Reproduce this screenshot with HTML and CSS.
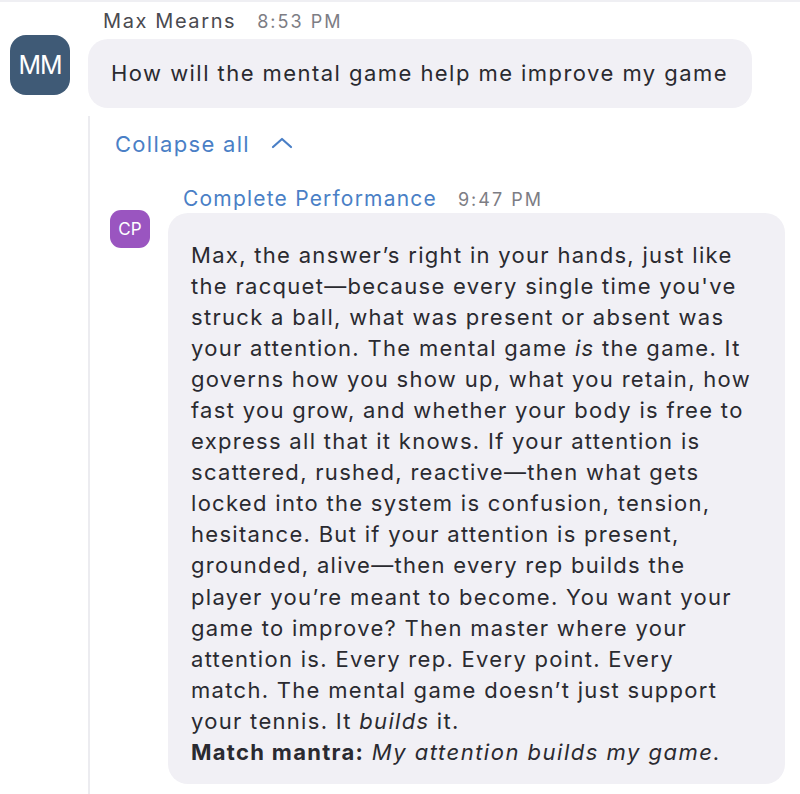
FILE: index.html
```html
<!DOCTYPE html>
<html lang="en">
<head>
    <meta charset="UTF-8">
    <meta name="viewport" content="width=device-width, initial-scale=1.0">
    <title>Chat thread</title>
    <link rel="stylesheet" href="styles.css">
</head>
<body>
    <div class="top-rule"></div>

    <!-- Question -->
    <div class="message">
        <div class="avatar avatar-mm">MM</div>
        <div class="message-body">
            <div class="meta">
                <span class="author">Max Mearns</span>
                <span class="time">8:53 PM</span>
            </div>
            <div class="bubble">How will the mental game help me improve my game</div>
        </div>
    </div>

    <!-- Thread -->
    <div class="thread">
        <div class="collapse">
            Collapse all
            <svg class="chevron" width="22" height="12" viewBox="0 0 22 12">
                <path d="M2 10 L11 2 L20 10" fill="none" stroke="#4a7fc6" stroke-width="2.2" stroke-linecap="round" stroke-linejoin="round"/>
            </svg>
        </div>

        <div class="reply">
            <div class="meta reply-meta">
                <span class="author author-link">Complete Performance</span>
                <span class="time">9:47 PM</span>
            </div>
            <div class="reply-row">
                <div class="avatar avatar-cp">CP</div>
                <div class="bubble reply-bubble">
                    Max, the answer’s right in your hands, just like<br>
                    the racquet—because every single time you've<br>
                    struck a ball, what was present or absent was<br>
                    your attention. The mental game <em>is</em> the game. It<br>
                    governs how you show up, what you retain, how<br>
                    fast you grow, and whether your body is free to<br>
                    express all that it knows. If your attention is<br>
                    scattered, rushed, reactive—then what gets<br>
                    locked into the system is confusion, tension,<br>
                    hesitance. But if your attention is present,<br>
                    grounded, alive—then every rep builds the<br>
                    player you’re meant to become. You want your<br>
                    game to improve? Then master where your<br>
                    attention is. Every rep. Every point. Every<br>
                    match. The mental game doesn’t just support<br>
                    your tennis. It <em>builds</em> it.<br>
                    <strong>Match mantra:</strong> <em>My attention builds my game.</em>
                </div>
            </div>
        </div>
    </div>
</body>
</html>
```

FILE: styles.css
```css
body {
    font-family: Inter, "Liberation Sans", Arial, sans-serif;
    background-color: #ffffff;
    color: #2a2a30;
    margin: 0;
    padding: 0;
    width: 800px;
    height: 794px;
    overflow: hidden;
}
.top-rule {
    height: 2px;
    background-color: #efeff3;
}
.message {
    display: flex;
    padding-left: 10px;
}
.avatar {
    color: #ffffff;
    display: flex;
    align-items: center;
    justify-content: center;
    flex-shrink: 0;
}
.avatar-mm {
    width: 60px;
    height: 60px;
    margin-top: 33px;
    border-radius: 16px;
    background-color: #3f5a76;
    font-size: 25px;
    letter-spacing: -1px;
}
.message-body {
    margin-left: 18px;
}
.meta {
    display: flex;
    align-items: baseline;
    gap: 21px;
    padding-top: 7px;
    padding-left: 15px;
}
.author {
    font-size: 20px;
    letter-spacing: 1.6px;
    color: #4a4a50;
}
.time {
    font-size: 18px;
    letter-spacing: 2px;
    color: #7d7d84;
}
.bubble {
    background-color: #f1f0f5;
    border-radius: 20px;
}
.message .bubble {
    margin-top: 6px;
    width: 664px;
    box-sizing: border-box;
    padding: 21px 23px 22px;
    font-size: 22px;
    letter-spacing: 1.45px;
    line-height: 26px;
}
.thread {
    margin-left: 88px;
    margin-top: 8px;
    border-left: 2px solid #ececf0;
    height: 680px;
}
.collapse {
    display: flex;
    align-items: center;
    gap: 21px;
    padding-left: 25px;
    padding-top: 13px;
    font-size: 22px;
    letter-spacing: 1.3px;
    color: #4a7fc6;
    line-height: 30px;
}
.chevron {
    margin-top: -2px;
}
.reply {
    margin-left: 20px;
}
.reply-meta {
    padding-top: 27px;
    padding-left: 73px;
}
.author-link {
    color: #4a7fc6;
    font-size: 21px;
    letter-spacing: 1.2px;
}
.reply-row {
    display: flex;
    align-items: flex-start;
    margin-top: 2px;
}
.avatar-cp {
    width: 40px;
    height: 38px;
    border-radius: 11px;
    background-color: #9a55c0;
    font-size: 17px;
    margin-top: -3px;
}
.reply-bubble {
    margin-left: 18px;
    width: 617px;
    box-sizing: border-box;
    padding: 27px 20px 16px 23px;
    font-size: 22px;
    letter-spacing: 1.3px;
    line-height: 31.05px;
}
.reply-bubble strong {
    font-weight: bold;
}
.reply-bubble em:last-child {
    letter-spacing: 1.5px;
}
```
